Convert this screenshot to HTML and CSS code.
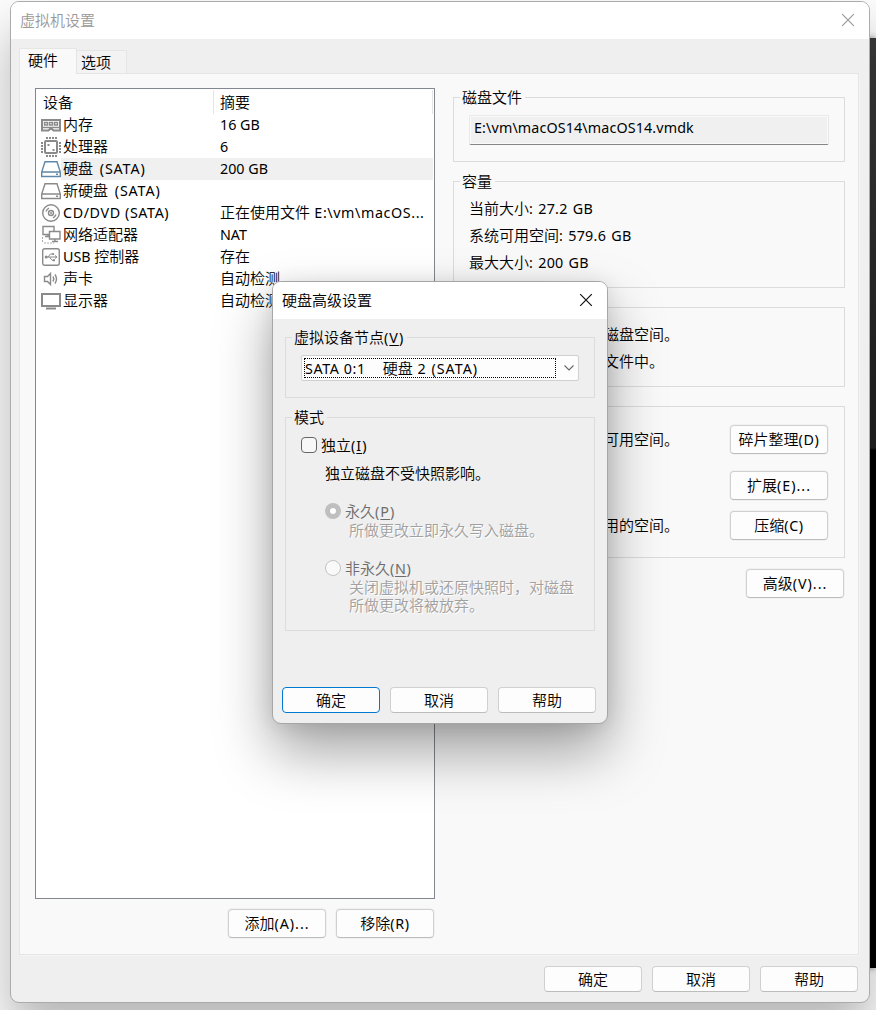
FILE: index.html
```html
<!DOCTYPE html>
<html lang="zh-CN">
<head>
<meta charset="utf-8">
<title>虚拟机设置</title>
<link rel="stylesheet" href="styles.css">
</head>
<body>
<div class="backdrop"></div>
<main class="window">
  <header class="titlebar">
    <span class="title inactive">虚拟机设置</span>
    <svg class="close inactive" width="14" height="14" viewBox="0 0 14 14"><path d="M1.2 1.2 12.8 12.8M12.8 1.2 1.2 12.8"/></svg>
  </header>
  <nav class="tabs">
    <span class="tab active">硬件</span>
    <span class="tab">选项</span>
  </nav>
  <section class="page">
    <div class="left">
      <div class="list">
        <div class="list-head"><span class="c1">设备</span><span class="c2">摘要</span></div>
        <div class="row">
          <svg viewBox="0 0 20 20"><path class="l" d="M1 5h18v10.500h-6.500l-1.500-1.500h-2l-1.500 1.500H1z" /><path class="thin" d="M3.500 7.500h3v2.500h-3zM8.500 7.500h3v2.500h-3zM13.500 7.500h3v2.500h-3zM1 12.500h18"/></svg>
          <span class="c1">内存</span><span class="c2"><b>16 GB</b></span></div>
        <div class="row">
          <svg viewBox="0 0 20 20"><rect class="l" x="4" y="4" width="12" height="12" rx="1"/><path class="pins" d="M5 1h11M5 19h11M1 5v11M19 5v11"/><path class="dots" d="M6.500 7h2v2h-2zM11.500 12h2v2h-2z"/></svg>
          <span class="c1">处理器</span><span class="c2"><b>6</b></span></div>
        <div class="row selected">
          <svg class="blue" viewBox="0 0 20 20"><path class="thin" d="M4 2.700h12L19.300 13v4.500H.7V13zM.7 13h18.600M15 15.300h2"/></svg>
          <span class="c1">硬盘<b class="sata"> (SATA)</b></span><span class="c2"><b>200 GB</b></span></div>
        <div class="row">
          <svg viewBox="0 0 20 20"><path class="thin" d="M4 2.700h12L19.300 13v4.500H.7V13zM.7 13h18.600M15 15.300h2"/></svg>
          <span class="c1">新硬盘<b class="sata"> (SATA)</b></span><span class="c2"></span></div>
        <div class="row">
          <svg viewBox="0 0 20 20"><circle class="thin" cx="10" cy="10" r="8.300"/><circle class="thin" cx="10" cy="10" r="2.500"/><circle class="dots" cx="10" cy="10" r="1"/><path class="thin" d="M5 8.500Q6 6 8 5.200M15 11.500Q14 14 12 14.800"/></svg>
          <span class="c1"><b class="w">CD/DVD (SATA)</b></span><span class="c2">正在使用文件<b class="w"> E:\vm\macOS...</b></span></div>
        <div class="row">
          <svg viewBox="0 0 20 20"><path class="thin" d="M2 1.500h11v8H2zM4 11.500h4M7 9.500v2"/><path class="thin screen" d="M8.500 6.500h10.500v7.500H8.500zM11 16.500h6M14 14v2.500"/><path class="pins dim" d="M1.500 12v6M3 18h10"/></svg>
          <span class="c1">网络适配器</span><span class="c2"><b>NAT</b></span></div>
        <div class="row">
          <svg viewBox="0 0 20 20"><rect class="thin" x="1.700" y="1.700" width="16.600" height="16.600" rx="2"/><path class="fine" d="M4.500 10h11M7 10l2.500-3h2.500M8.500 10l2.500 3.300h2M14 8.500l2 1.500-2 1.500"/><circle class="dots" cx="5.200" cy="10" r="1.500"/><circle class="dots" cx="12.200" cy="7" r="1.100"/><path class="dots" d="M12 12.300h2v2h-2z"/></svg>
          <span class="c1"><b>USB </b>控制器</span><span class="c2">存在</span></div>
        <div class="row">
          <svg viewBox="0 0 20 20"><path class="thin" d="M3.500 7.500h3L9.500 4.500v11l-3-3h-3zM12 7.500q1.600 2.500 0 5M14 5.500q3 4.500 0 9"/></svg>
          <span class="c1">声卡</span><span class="c2">自动检测</span></div>
        <div class="row">
          <svg viewBox="0 0 20 20"><path class="l" d="M1 3h18v12H1z"/><path class="l" d="M5 17.500h10"/></svg>
          <span class="c1">显示器</span><span class="c2">自动检测</span></div>
      </div>
      <div class="actions">
        <button class="btn tall">添加<b class="d">(A)...</b></button>
        <button class="btn tall">移除<b class="w">(R)</b></button>
      </div>
    </div>
    <div class="right">
      <div class="group g-file">
        <span class="legend">磁盘文件</span>
        <div class="field"><b class="path">E:\vm\macOS14\macOS14.vmdk</b></div>
      </div>
      <div class="group g-cap">
        <span class="legend">容量</span>
        <p>当前大小<b class="size">: 27.2 GB</b></p>
        <p>系统可用空间<b class="size">: 579.6 GB</b></p>
        <p>最大大小<b class="size">: 200 GB</b></p>
      </div>
      <div class="group g-info">
        <p>磁盘空间。</p>
        <p>文件中。</p>
      </div>
      <div class="group g-util">
        <div class="util"><span>可用空间。</span><button class="btn tall">碎片整理<b class="w">(D)</b></button></div>
        <div class="util second"><span></span><button class="btn tall">扩展<b class="d">(E)...</b></button></div>
        <div class="util third"><span>用的空间。</span><button class="btn tall">压缩<b class="w">(C)</b></button></div>
      </div>
      <button class="btn tall advanced">高级<b class="d">(V)...</b></button>
    </div>
  </section>
  <footer class="footer">
    <button class="btn">确定</button>
    <button class="btn">取消</button>
    <button class="btn">帮助</button>
  </footer>
</main>

<section class="dialog">
  <header class="titlebar">
    <span class="title">硬盘高级设置</span>
    <svg class="close" width="14" height="14" viewBox="0 0 14 14"><path d="M1.2 1.2 12.8 12.8M12.8 1.2 1.2 12.8"/></svg>
  </header>
  <div class="dialog-body">
    <div class="group g-node">
      <span class="legend">虚拟设备节点<b class="d">(<u>V</u>)</b></span>
      <div class="combo">
        <span class="value"><b class="w">SATA 0:1</b><span class="device">硬盘<b class="d"> 2 (SATA)</b></span></span>
        <svg width="12" height="8" viewBox="0 0 12 8"><path d="M1.500 1.500 6 6l4.500-4.500"/></svg>
      </div>
    </div>
    <div class="group g-mode">
      <span class="legend">模式</span>
      <div class="option"><i class="check"></i><span>独立<b class="d">(<u>I</u>)</b></span></div>
      <p class="note">独立磁盘不受快照影响。</p>
      <div class="option sub off"><i class="radio on"></i><span>永久<b class="d">(<u>P</u>)</b></span></div>
      <p class="hint">所做更改立即永久写入磁盘。</p>
      <div class="option sub off last"><i class="radio"></i><span>非永久<b class="w">(<u>N</u>)</b></span></div>
      <p class="hint">关闭虚拟机或还原快照时，对磁盘<br>所做更改将被放弃。</p>
    </div>
    <div class="dialog-actions">
      <button class="btn primary">确定</button>
      <button class="btn">取消</button>
      <button class="btn">帮助</button>
    </div>
  </div>
</section>
</body>
</html>
```
FILE: styles.css
```css
* { box-sizing: border-box; }
body {
  margin: 0;
  width: 876px;
  height: 1010px;
  overflow: hidden;
  position: relative;
  background: #fcfcfc;
  color: #000;
  font: 15px/20px "Noto Sans CJK SC", sans-serif;
  font-weight: 350;
}
b { font-family: "Noto Sans", sans-serif; font-size: 14.3px; font-weight: 400; line-height: 0; white-space: pre; }
b.w { letter-spacing: .6px; }
b.d { letter-spacing: 1px; }
b.path { letter-spacing: .13px; }
b.sata { letter-spacing: .85px; word-spacing: 2.2px; }
b.size { letter-spacing: .3px; word-spacing: 1px; }
p { margin: 0; white-space: nowrap; }
u { text-underline-offset: 2px; }

.backdrop {
  position: absolute;
  left: 860px;
  top: 38px;
  width: 16px;
  height: 930px;
  background: linear-gradient(#3b3b3b, #202020 410px, #000 412px);
  box-shadow: 0 0 6px rgba(0, 0, 0, .45);
}
.window {
  position: relative;
  width: 860px;
  height: 1002px;
  margin: 1px 0 0 10px;
  float: left;
  background: #efefef;
  border: 1px solid #ababab;
  border-radius: 9px;
  box-shadow: 0 30px 50px rgba(0, 0, 0, .28);
}
.titlebar {
  display: flex;
  align-items: center;
  justify-content: space-between;
  height: 37px;
  padding: 0 14px 1px 9px;
  background: #fff;
  border-radius: 8px 8px 0 0;
}
.title.inactive { color: #999; }
.close { fill: none; stroke: #111; stroke-width: 1.2; }
.close.inactive { stroke: #999; }

.tabs { display: flex; align-items: flex-end; height: 35px; padding: 9px 0 0 8px; margin-bottom: -1px; }
.tab {
  width: 50px;
  height: 24px;
  padding: 1px 0 0 4px;
  border: 1px solid #e5e5e5;
  border-left: 0;
  background: #f3f3f3;
}
.tab.active {
  position: relative;
  z-index: 1;
  width: 58px;
  height: 26px;
  padding: 1px 0 0 8px;
  border: 1px solid #e5e5e5;
  border-bottom: 0;
  background: #f9f9f9;
}
.page {
  display: flex;
  gap: 18px;
  width: 840px;
  height: 882px;
  margin-left: 8px;
  padding: 14px 0 0 15px;
  background: #f9f9f9;
  border: 1px solid #e5e5e5;
  box-shadow: 1px 1px 0 #f4f4f4;
}
.left { width: 400px; }
.list { height: 811px; border: 1px solid #828790; background: #fff; }
.list-head { display: flex; height: 25px; padding: 1px 1px 0 0; line-height: 23px; }
.list-head .c1 { width: 178px; padding-left: 7px; border-right: 1px solid #e5e5e5; }
.list-head .c2 { flex: 1; padding-left: 6px; border-right: 1px solid #e5e5e5; }
.row { display: flex; align-items: center; height: 22px; padding-left: 5px; line-height: 20px; white-space: nowrap; }
.row svg { width: 20px; height: 20px; flex: none; fill: none; stroke: #8a8a8a; }
.row svg.blue { stroke: #5f88a8; }
.row .c1 { width: 154px; height: 22px; padding-left: 2px; }
.row .c2 { flex: 1; margin-right: 1px; padding-left: 5px; height: 22px; }
.row.selected .c1, .row.selected .c2 { background: #f0f0f0; }
.l { stroke-width: 2; }
.thin { stroke-width: 1.4; }
.fine { stroke-width: 1; }
.pins { stroke-width: 2; stroke-dasharray: 2 1; }
.pins.dim { stroke-width: 1; stroke: #aaa; }
.dots { fill: #8a8a8a; stroke: none; }
.screen { fill: #fff; }

.actions { display: flex; justify-content: flex-end; gap: 10px; padding: 10px 1px 0 0; }
.btn {
  flex: none;
  width: 98px;
  height: 26px;
  padding: 0;
  font: inherit;
  line-height: 22px;
  color: #000;
  text-align: center;
  white-space: nowrap;
  background: #fdfdfd;
  border: 1px solid #d0d0d0;
  border-bottom-color: #bcbcbc;
  border-radius: 4px;
}
.btn.tall { height: 29px; padding-bottom: 2px; box-shadow: 0 0 0 1px #f1f1f1; }
.btn.primary { border-color: #0078d4; }

.right { display: flex; flex-direction: column; gap: 19px; width: 392px; padding-top: 9px; }
.group { display: flex; flex-direction: column; border: 1px solid #dcdcdc; padding: 0 16px 0 15px; }
.legend {
  align-self: flex-start;
  height: 20px;
  margin: -11px 0 0 -9px;
  padding: 0 3px 0 2px;
  line-height: 20px;
  background: #f9f9f9;
}
.g-file { height: 65px; padding-right: 15px; }
.g-cap { height: 107px; }
.g-info { height: 80px; padding: 12px 0 0 150px; }
.g-util { height: 152px; padding-top: 9px; }
.g-cap p, .g-info p { height: 27px; line-height: 27px; }
.g-cap .legend { margin-bottom: 3px; }
.field {
  height: 30px;
  margin-top: 8px;
  padding: 0 4px;
  line-height: 21px;
  background: #f0f0f0;
  border: 1px solid #e8e8e8;
  border-bottom-color: #868686;
  border-radius: 2px;
  box-shadow: inset 0 0 0 1px #fafafa;
}
.util { display: flex; justify-content: space-between; align-items: center; height: 29px; margin-top: 9px; }
.util span { padding: 0 0 1px 135px; }
.util.second { margin-top: 17px; }
.util.third { margin-top: 11px; }
.advanced { align-self: flex-end; margin: -8px 1px 0 0; }
.footer { display: flex; justify-content: flex-end; gap: 10px; padding: 11px 11px 0 0; }

.dialog {
  position: absolute;
  left: 272px;
  top: 281px;
  width: 336px;
  height: 443px;
  background: #efefef;
  border: 1px solid #a6a6a6;
  border-radius: 9px;
  box-shadow: 0 28px 56px rgba(0, 0, 0, .36), 0 2px 20px rgba(0, 0, 0, .1);
}
.dialog-body { padding: 18px 12px 0; }
.dialog .legend { background: #efefef; }
.g-node { height: 61px; }
.g-mode { height: 214px; margin-top: 19px; }
.combo {
  display: flex;
  align-items: center;
  width: 278px;
  height: 26px;
  margin-top: 8px;
  padding: 0 4px 0 2px;
  background: #fdfdfd;
  border: 1px solid #d0d0d0;
  border-radius: 2px;
}
.combo .value { flex: none; width: 252px; height: 20px; line-height: 18px; border: 1px dotted #000; white-space: nowrap; }
.combo .device { padding-left: 17px; }
.combo svg { flex: none; margin-left: 7px; fill: none; stroke: #666; stroke-width: 1.1; }
.option { display: flex; align-items: center; height: 20px; margin-top: 8px; gap: 4px; }
.check { width: 16px; height: 16px; background: #f7f7f7; border: 1px solid #666; border-radius: 4px; }
.note { margin: 8px 0 0 24px; }
.option.sub { margin: 18px 0 0 24px; }
.off { color: #6d6d6d; }
.radio { width: 16px; height: 16px; background: #f9f9f9; border: 1px solid #c3c3c3; border-radius: 50%; }
.radio.on { background: #fff; border: 5px solid #bfbfbf; }
.hint { margin: 0 0 0 48px; line-height: 18px; color: #a0a0a0; text-shadow: 1px 1px 0 #fff; }
.option.sub.last { margin-top: 19px; }
.dialog-actions { display: flex; gap: 10px; margin: 56px 0 0 -3px; }
```
